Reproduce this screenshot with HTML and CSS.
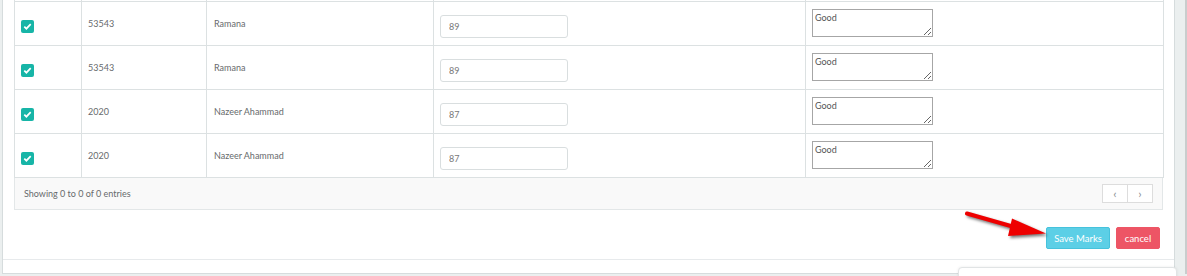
FILE: index.html
```html
<!DOCTYPE html>
<html lang="en">
<head>
  <meta charset="UTF-8" />
  <meta name="viewport" content="width=device-width,initial-scale=1.0" />
  <title>Enter Marks</title>
  <link rel="stylesheet" href="styles.css">
</head>
<body>

<div class="page">
  <!-- MARKS PANEL -->
  <div class="panel">
    <div class="panel-body">
      <div class="table-wrap">
        <table class="marks">
          <colgroup>
            <col class="c-check">
            <col class="c-id">
            <col class="c-name">
            <col class="c-mark">
            <col class="c-remark">
          </colgroup>
          <tbody>
            <tr class="row-cut"><td></td><td></td><td></td><td></td><td></td></tr>
            <tr>
              <td><span class="check"><svg viewBox="0 0 13 13"><path d="M3.3 6.6l2.1 2.1 4.3-4.6"/></svg></span></td>
              <td>53543</td>
              <td>Ramana</td>
              <td><input class="mark-input" type="text" value="89"></td>
              <td><textarea class="remark">Good</textarea></td>
            </tr>
            <tr>
              <td><span class="check"><svg viewBox="0 0 13 13"><path d="M3.3 6.6l2.1 2.1 4.3-4.6"/></svg></span></td>
              <td>53543</td>
              <td>Ramana</td>
              <td><input class="mark-input" type="text" value="89"></td>
              <td><textarea class="remark">Good</textarea></td>
            </tr>
            <tr>
              <td><span class="check"><svg viewBox="0 0 13 13"><path d="M3.3 6.6l2.1 2.1 4.3-4.6"/></svg></span></td>
              <td>2020</td>
              <td>Nazeer Ahammad</td>
              <td><input class="mark-input" type="text" value="87"></td>
              <td><textarea class="remark">Good</textarea></td>
            </tr>
            <tr>
              <td><span class="check"><svg viewBox="0 0 13 13"><path d="M3.3 6.6l2.1 2.1 4.3-4.6"/></svg></span></td>
              <td>2020</td>
              <td>Nazeer Ahammad</td>
              <td><input class="mark-input" type="text" value="87"></td>
              <td><textarea class="remark">Good</textarea></td>
            </tr>
          </tbody>
        </table>
        <div class="table-foot">
          <span>Showing 0 to 0 of 0 entries</span>
          <div class="pager">
            <a href="#">&lsaquo;</a>
            <a href="#">&rsaquo;</a>
          </div>
        </div>
      </div>

      <div class="actions">
        <button class="btn btn-save" type="button">Save Marks</button>
        <button class="btn btn-cancel" type="button">cancel</button>
      </div>
    </div>
    <div class="panel-foot"></div>
  </div>
  <div class="rail"></div>
</div>

<!-- annotation arrow pointing at the save button -->
<svg class="arrow" width="1187" height="276" viewBox="0 0 1187 276">
  <path class="arrow-shaft" d="M967 213.5 L1016 227.5"/>
  <polygon class="arrow-head" points="1012,218.5 1046,233.5 1008,236"/>
</svg>

<!-- chat widget peeking in at the bottom -->
<div class="widget"></div>

</body>
</html>
```

FILE: styles.css
```css
* {
  box-sizing: border-box;
  margin: 0;
  padding: 0;
}
body {
  font-family: Lato, "Open Sans", sans-serif;
  font-size: 9px;
  color: #676a6c;
  background-color: #ebefef;
  overflow: hidden;
  height: 276px;
}

/* PAGE / PANEL */
.page {
  display: flex;
  padding-left: 2px;
  margin-top: -43px;
}
.panel {
  width: 1173px;
  background-color: #fff;
  border: 1px solid #d6dcdd;
  border-top: none;
}
.panel-body {
  padding: 0 11px 10px;
  border-bottom: 1px solid #e7eaec;
}
.panel-foot {
  height: 13px;
}
.rail {
  width: 2px;
  margin-left: auto;
  background-color: #c9cdcd;
}

/* TABLE */
.table-wrap {
  width: 1149px;
}
.marks {
  width: 1149px;
  table-layout: fixed;
  border-collapse: collapse;
}
.c-check { width: 67px; }
.c-id { width: 125px; }
.c-name { width: 227px; }
.c-mark { width: 372px; }
.c-remark { width: 358px; }
.marks tr {
  height: 44px;
}
.marks td {
  border: 1px solid #dce1e2;
  padding: 0 6px;
  vertical-align: middle;
  white-space: nowrap;
}
.marks td:nth-child(3) {
  padding-left: 7px;
}
.check {
  display: block;
  width: 13px;
  height: 13px;
  margin-top: 5px;
  border-radius: 2px;
  background-color: #17b5a7;
}
.check svg {
  display: block;
  width: 13px;
  height: 13px;
  fill: none;
  stroke: #fff;
  stroke-width: 1.7;
}
.mark-input {
  display: block;
  width: 128px;
  height: 23px;
  margin-top: 5px;
  padding: 0 8px;
  border: 1px solid #d9dedf;
  border-radius: 3px;
  font-family: inherit;
  font-size: 9px;
  color: #777;
  outline: none;
}
.remark {
  display: block;
  width: 121px;
  height: 28px;
  margin-bottom: 2px;
  padding: 1px 2px;
  border: 1px solid #a6a6a6;
  font-family: inherit;
  font-size: 9px;
  color: #555;
  line-height: 13px;
}

/* TABLE FOOTER */
.table-foot {
  display: flex;
  justify-content: space-between;
  align-items: center;
  height: 32px;
  padding: 0 9px 0 9px;
  background-color: #f9f9f9;
  border: 1px solid #e3e7e8;
  border-top: none;
}
.pager {
  display: flex;
}
.pager a {
  width: 26px;
  height: 19px;
  display: flex;
  align-items: center;
  justify-content: center;
  background-color: #fff;
  border: 1px solid #dddddd;
  color: #8a8f93;
  font-size: 12px;
  text-decoration: none;
}
.pager a + a {
  margin-left: -1px;
}

/* BUTTONS */
.actions {
  display: flex;
  justify-content: flex-end;
  gap: 6px;
  margin-top: 17px;
  padding-right: 3px;
}
.btn {
  height: 22px;
  padding: 0;
  border-radius: 2px;
  font-family: inherit;
  font-size: 9.5px;
  color: #fff;
  white-space: nowrap;
  cursor: pointer;
}
.btn-save {
  width: 64px;
  background-color: #5ccfe6;
  border: 1px solid #46c2dc;
}
.btn-cancel {
  width: 44px;
  background-color: #ed5565;
  border: 1px solid #ed5565;
}

/* OVERLAYS */
.arrow {
  position: absolute;
  left: 0;
  top: 0;
  pointer-events: none;
  filter: drop-shadow(2px 2px 1.5px rgba(0,0,0,0.55));
}
.arrow-shaft {
  stroke: #ee0000;
  stroke-width: 4;
  stroke-linecap: round;
}
.arrow-head {
  fill: #ee0000;
}
.widget {
  position: absolute;
  left: 958px;
  top: 267px;
  width: 219px;
  height: 20px;
  background-color: #fff;
  border: 1px solid #e1e4e5;
  border-radius: 4px 4px 0 0;
  box-shadow: 0 0 3px rgba(0,0,0,0.08);
}
```
